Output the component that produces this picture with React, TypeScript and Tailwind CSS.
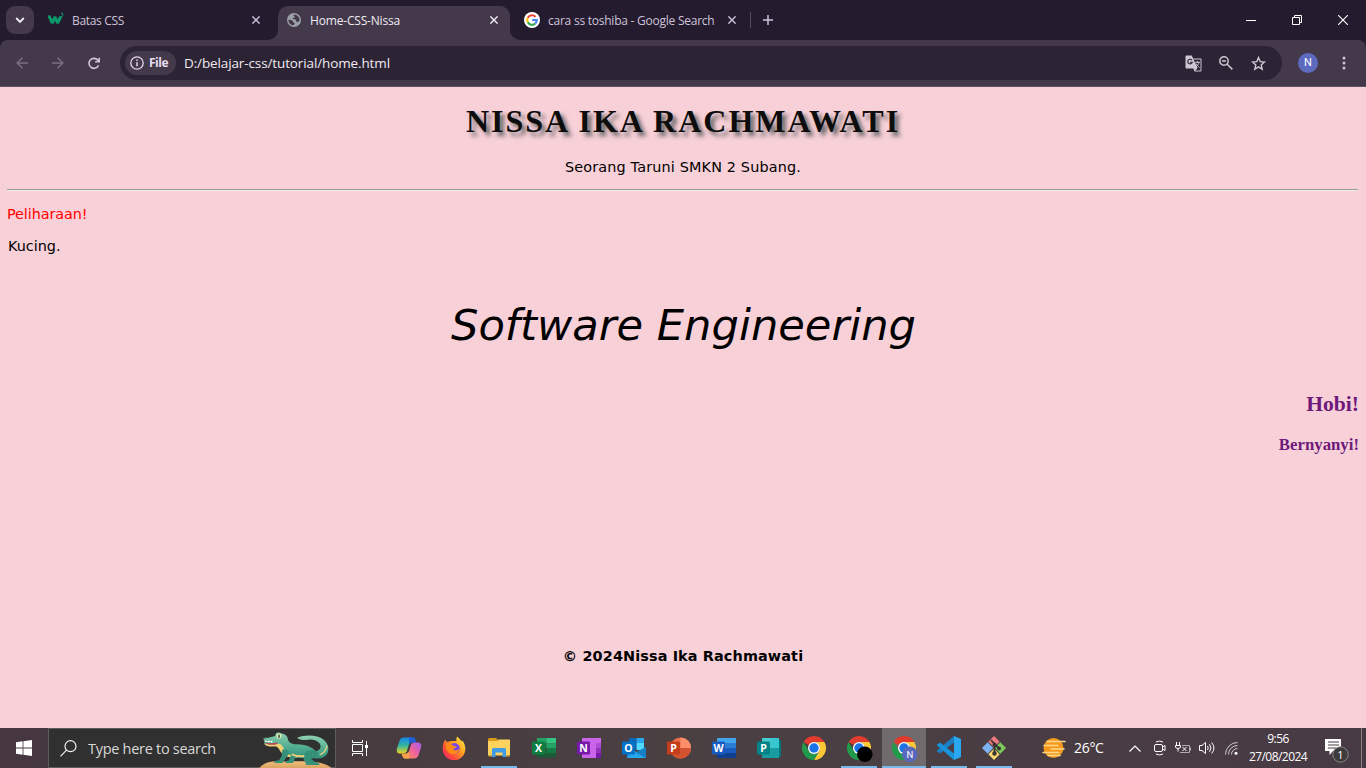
import React from "react";

type Kids = { children?: React.ReactNode };

const CloseIcon = ({ className = "" }: { className?: string }) => (
  <svg className={`h-2 w-2 shrink-0 ${className}`} viewBox="0 0 8 8" fill="none" stroke="currentColor" strokeWidth="1.4">
    <path d="M.4.4l7.2 7.2M7.6.4L.4 7.6" />
  </svg>
);

const GoogleIcon = () => (
  <svg className="h-4 w-4 shrink-0" viewBox="0 0 16 16" fill="none" strokeWidth="2.2">
    <circle cx="8" cy="8" r="8" fill="#fff" />
    <path d="M11.6 4.9A4.8 4.8 0 0 0 3.8 5.7" stroke="#ea4335" />
    <path d="M3.8 5.7a4.8 4.8 0 0 0 0 4.6" stroke="#fbbc05" />
    <path d="M3.8 10.3a4.8 4.8 0 0 0 7.5 1.2" stroke="#34a853" />
    <path d="M11.3 11.5A4.8 4.8 0 0 0 12.8 8H8.2" stroke="#4285f4" />
  </svg>
);

const GlobeIcon = () => (
  <svg className="h-[14px] w-[14px] shrink-0" viewBox="0 0 14 14">
    <circle cx="7" cy="7" r="7" fill="#9aa0a6" />
    <path d="M7.200 1.600c-.8.5-.6 1.600.3 1.900 1 .3 0 1.300-.9 1.300-1 0-.8 1.400.2 1.500 1.900 0 2.400.7 2.400 1.600 0 1 1 1.200 1.900.8.9-.3 1.300-.9 1.500-1.700A5.600 5.600 0 0 0 7.200 1.600zM1.500 6.700c1.400 0 3 .2 3.800.9.7.7.6 1.700 1.500 2 .8.2 1.100.9.6 1.600-.3.5-.7.9-1.200 1.100A5.600 5.600 0 0 1 1.500 6.700z" fill="#43394a" />
  </svg>
);

const W3Icon = () => (
  <svg className="h-4 w-4 shrink-0" viewBox="0 0 16 16" fill="none" stroke="#0c9a6a">
    <path d="M.8 3.500l3.400 7.500 2.800-6 2.600 6 3.200-6.500" strokeWidth="3" strokeLinejoin="bevel" />
    <path d="M13 1.300h2l-1.100 1.400c1.600.1 1.500 2.400-.9 1.800" strokeWidth="1" />
  </svg>
);

const FlareLeft = () => (
  <svg className="h-[10px] w-[10px] shrink-0 self-end" viewBox="0 0 10 10"><path d="M10 0v10H0A10 10 0 0 0 10 0z" fill="#43394a" /></svg>
);
const FlareRight = () => (
  <svg className="h-[10px] w-[10px] shrink-0 self-end" viewBox="0 0 10 10"><path d="M0 0v10h10A10 10 0 0 1 0 0z" fill="#43394a" /></svg>
);

function TabStrip() {
  return (
    <div className="flex h-10 shrink-0 items-start bg-[#241c2e] pl-[6px] text-xs leading-4 text-[#cfc2da]">
      <div className="mt-[6px] flex h-7 w-7 items-center justify-center rounded-[9px] bg-[#43394a]">
        <svg className="h-2 w-[10px]" viewBox="0 0 10 8" fill="none" stroke="#f1e9f5" strokeWidth="1.900"><path d="M1.200 2L5 5.800 8.800 2" /></svg>
      </div>
      <div className="flex h-10 w-[234px] items-center pl-[14px] pr-2">
        <W3Icon />
        <span className="ml-2 flex-1 whitespace-nowrap pt-[2px] tracking-[-0.320px]">Batas CSS</span>
        <CloseIcon />
      </div>
      <div className="flex h-10"><FlareLeft /></div>
      <div className="mt-[6px] flex h-[34px] w-[232px] items-center rounded-t-[10px] bg-[#43394a] pb-[6px] pl-[9px] pr-3 text-[#f1ebf3]">
        <GlobeIcon />
        <span className="ml-[9px] flex-1 whitespace-nowrap pt-[2px] tracking-[-0.180px]">Home-CSS-Nissa</span>
        <CloseIcon />
      </div>
      <div className="flex h-10"><FlareRight /></div>
      <div className="flex h-10 w-[216px] items-center pl-1">
        <GoogleIcon />
        <span className="ml-2 flex-1 whitespace-nowrap pt-[2px] tracking-[-0.240px]">cara ss toshiba - Google Search</span>
        <CloseIcon />
      </div>
      <div className="flex h-10 flex-1 items-center pl-[14px]">
        <div className="h-4 w-px bg-[#564a5e]" />
        <svg className="ml-[12px] h-[10px] w-[10px]" viewBox="0 0 10 10" stroke="#cfc2da" strokeWidth="1.500"><path d="M0 5h10M5 0v10" /></svg>
      </div>
      <div className="flex h-10 items-center pr-[18px] text-white">
        <svg className="mr-9 h-[10px] w-[10px]" viewBox="0 0 10 10" stroke="currentColor"><path d="M0 5.500h10" /></svg>
        <svg className="mr-9 h-[10px] w-[10px]" viewBox="0 0 10 10" fill="none" stroke="currentColor"><path d="M.5 2.500h7v7h-7zM2.500 2.500v-2h7v7h-2" /></svg>
        <svg className="h-[10px] w-[10px]" viewBox="0 0 10 10" fill="none" stroke="currentColor" strokeWidth="1.100"><path d="M0 0l10 10M10 0L0 10" /></svg>
      </div>
    </div>
  );
}

function Toolbar() {
  return (
    <div className="h-[47px] shrink-0 bg-[#241c2e]">
      <div className="flex h-full items-center rounded-t-[8px] border-b border-[#5c5261] bg-[#43394a] pl-4 pr-5">
        <svg className="h-3 w-3" viewBox="0 0 12 12" fill="none" stroke="#7b7082" strokeWidth="1.500"><path d="M12 6H1.500M6.500.7L1.200 6l5.300 5.300" /></svg>
        <svg className="ml-6 h-3 w-3" viewBox="0 0 12 12" fill="none" stroke="#7b7082" strokeWidth="1.500"><path d="M0 6h10.500M5.500.7L10.800 6l-5.300 5.300" /></svg>
        <svg className="ml-6 h-[13px] w-3" viewBox="0 0 12 13" fill="none" stroke="#d2c5dc" strokeWidth="1.600"><path d="M10.600 8.300A5 5 0 1 1 9.900 3.200L11 4.600" /><path d="M11.200.8v4H7.200" /></svg>
        <div className="ml-5 flex h-[34px] flex-1 items-center rounded-full bg-[#2c2434] pl-[5px] pr-4 text-[#f0eaf2]">
          <div className="flex h-6 w-[51px] items-center rounded-full bg-[#43394a] pl-[5px]">
            <svg className="h-[14px] w-[14px]" viewBox="0 0 14 14" fill="none" stroke="#e4d9ea" strokeWidth="1.300"><circle cx="7" cy="7" r="6.200" /><path d="M7 6.200v4M7 3.600v1.400" strokeWidth="1.500" /></svg>
            <span className="ml-[5px] text-xs font-bold leading-4 tracking-[-0.500px] text-[#e8def0]">File</span>
          </div>
          <span className="ml-2 flex-1 whitespace-nowrap text-[13.500px] leading-5 tracking-[-0.120px]">D:/belajar-css/tutorial/home.html</span>
          <svg className="h-[17px] w-[17px]" viewBox="0 0 17 17">
            <path d="M1.500.5h5.300l1.300 3h7.400a1 1 0 0 1 1 1V15.500a1 1 0 0 1-1 1H9.600l-1.300-3H1.500a1 1 0 0 1-1-1v-11a1 1 0 0 1 1-1z" fill="#cfc6d4" />
            <path d="M8.500 4.500h7v11h-5l2-2.500z" fill="#2c2434" />
            <path d="M7 5.200A2.300 2.300 0 1 0 7.300 7.300H5" fill="none" stroke="#2c2434" strokeWidth="1.100" />
            <path d="M10 7.300h5M12.500 6v1.300M14 7.300c-.4 2-1.700 3.500-3.400 4.600M11 8.500c.700 1.600 1.800 2.800 3.500 4" fill="none" stroke="#cfc6d4" />
          </svg>
          <svg className="ml-[17px] h-[14px] w-[14px]" viewBox="0 0 14 14" fill="none" stroke="#cfc6d4" strokeWidth="1.500"><circle cx="5" cy="5" r="4.200" /><path d="M3 5h4M8.200 8.200l5.200 5.200" /></svg>
          <svg className="ml-[18px] h-[15px] w-[15px]" viewBox="0 0 15 15" fill="none" stroke="#cfc6d4" strokeWidth="1.400"><path d="M7.500 1.600l1.700 4 4.300.4-3.300 2.900 1 4.300-3.700-2.300-3.700 2.300 1-4.300L1.500 6l4.300-.4z" /></svg>
        </div>
        <div className="ml-4 flex h-5 w-5 items-center justify-center rounded-full bg-[#5c6bc0] pt-px font-[Roboto] text-[11px] text-white">N</div>
        <svg className="ml-[24px] h-[14px] w-[4px]" viewBox="0 0 4 14" fill="#cfc2da"><circle cx="2" cy="2" r="1.500" /><circle cx="2" cy="7" r="1.500" /><circle cx="2" cy="12" r="1.500" /></svg>
      </div>
    </div>
  );
}

function Page() {
  return (
    <main className="min-h-0 flex-1 overflow-hidden bg-[#f8d0d8] px-[7px] pt-4 font-['DejaVu_Sans',sans-serif] text-[14.400px] leading-[18px] text-black">
      <h1 className="whitespace-nowrap text-center font-['Liberation_Serif',serif] text-[32px] font-bold leading-9 tracking-[2px] text-[#0d0d0d] [text-shadow:4px_4px_4px_#666]">NISSA IKA RACHMAWATI</h1>
      <p className="mt-[19px] text-center tracking-[0.160px]">Seorang Taruni SMKN 2 Subang.</p>
      <hr className="mr-px mt-[13px] h-[2px] border-0 border-t border-[#9a9a9a] bg-[#eeeeee]" />
      <p className="mt-[14px] tracking-[-0.080px] text-[#ff0000]">Peliharaan!</p>
      <p className="mt-[14px] pl-px">Kucing.</p>
      <p className="mt-[44px] pl-px text-center text-[43.200px] italic leading-[52px]">Software Engineering</p>
      <h2 className="mt-10 text-right font-['Liberation_Serif',serif] text-[21.600px] font-bold leading-[26px] text-[#6e1a7c]">Hobi!</h2>
      <p className="mt-[18px] text-right font-['Liberation_Serif',serif] text-[16.800px] font-bold leading-5 text-[#6e1a7c]">Bernyanyi!</p>
      <p className="mt-[192px] text-center font-bold tracking-[0.130px]">© 2024Nissa Ika Rachmawati</p>
    </main>
  );
}

const Crocodile = () => (
  <svg className="h-[39px] w-[77px] shrink-0" viewBox="85 10 231 117">
    <defs>
      <linearGradient id="croc" x1="0" y1="0" x2="0" y2="1"><stop offset="0" stopColor="#8fd0b2" /><stop offset=".6" stopColor="#4fab8e" /><stop offset="1" stopColor="#34907c" /></linearGradient>
      <linearGradient id="sand" x1="0" y1="0" x2="0" y2="1"><stop offset="0" stopColor="#f2be7a" /><stop offset="1" stopColor="#d8a060" /></linearGradient>
    </defs>
    <path d="M88 129c10-16 30-22 52-22 30 2 40-2 70 0 40 0 80 4 98 22z" fill="url(#sand)" />
    <path d="M202 36c26-10 62-8 80 6 18 14 18 38 4 50-14 10-34 8-46-2l-12-16c20 8 38 4 44-6 6-14-14-28-34-26-14 2-28 2-36-6z" fill="url(#croc)" />
    <path d="M101 40c2-5 8-4 12-3l24-6c-2-9 10-14 17-8 16 3 20 10 22 22 4 8 14 11 26 11 30 0 54 12 60 28-10 14-50 14-78 12-20-4-32-20-38-36l-30 1c-10-1-14-7-11-13z" fill="url(#croc)" />
    <path d="M104 54c12 3 28 3 44 0 8 2 12 10 18 20 8 14 20 18 40 20-30 6-50-6-58-24-4-6-8-8-14-8-14 2-26-2-30-8z" fill="#f3cf75" />
    <path d="M105 50c14 4 26 4 40 0l-4 6c-14 3-28 2-36-6z" fill="#b84850" />
    <path d="M104 45l5 5 4-4 4 5 4-4 4 4 5-5" fill="#fff" />
    <ellipse cx="148" cy="31" rx="7" ry="8" fill="#dceeb0" /><ellipse cx="148" cy="32" rx="2" ry="6" fill="#172626" />
    <circle cx="106" cy="39" r="2" fill="#256b60" />
    <path d="M158 72c10-4 20 2 20 12l-10 14-10 14h-24c-2-4 6-8 14-8l8-12zM186 84c8-2 14 2 12 10l-8 18h-24c2-6 8-6 12-8zM228 78c18-8 38-4 38 8-2 10-16 12-22 14l12 8c8 2 14 6 14 10h-40l-10-22z" fill="#349079" />
    <path d="M186 86c12 5 26 7 38 5" stroke="#f3cf75" strokeWidth="6" fill="none" />
    <path d="M270 88c14-6 20-16 22-28" stroke="#e5cf7f" strokeWidth="4" fill="none" />
  </svg>
);

const Copilot = () => (
  <svg className="h-6 w-[26px]" viewBox="0 0 26 24">
    <defs>
      <linearGradient id="cpa" x1="0" y1="0" x2="0" y2="1"><stop offset="0" stopColor="#1687ea" /><stop offset=".5" stopColor="#32b6a0" /><stop offset="1" stopColor="#f0d31c" /></linearGradient>
      <linearGradient id="cpb" x1="1" y1="0" x2="0" y2="1"><stop offset="0" stopColor="#a05df0" /><stop offset=".5" stopColor="#f2629b" /><stop offset="1" stopColor="#fa9b48" /></linearGradient>
    </defs>
    <path d="M8 1.500h9.500L14 5.500l-2.500 8.300c-.8 2.700-2 3.700-4.500 3.700H4c-3 0-3.700-2.300-3-5L3.500 5C4.300 2.500 5.700 1.500 8 1.500z" fill="url(#cpa)" />
    <path d="M13 1.500h4c2 0 2.600 1.800 3.400 5H17c-2 0-3 .6-4 2z" fill="#1c5fd6" />
    <path d="M18 22.500H8.500l3.500-4 2.500-8.300c.8-2.700 2-3.700 4.500-3.700h3c3 0 3.700 2.300 3 5L22.500 19c-.8 2.500-2.200 3.500-4.500 3.500z" fill="url(#cpb)" />
    <path d="M13 22.500H9c-2 0-2.600-1.800-3.400-5H9c2 0 3-.6 4-2z" fill="#f5a24a" />
    <path d="M12.600 9.500h1.800l-1.400 5.500h-1.800z" fill="#4a4042" />
  </svg>
);

const Firefox = () => (
  <svg className="h-6 w-6" viewBox="0 0 24 24">
    <defs>
      <linearGradient id="ffo" x1="1" y1="0" x2="0" y2="1"><stop offset="0" stopColor="#fff44f" /><stop offset=".4" stopColor="#ffa31e" /><stop offset=".7" stopColor="#ff4b3a" /><stop offset="1" stopColor="#e8207a" /></linearGradient>
    </defs>
    <path d="M15.500.5c1 2 3 3 4.500 5l.5-1c2 3 3 6 2.800 8.500A11.300 11.300 0 0 1 .7 13C.5 9 1.500 6 3.500 3.500L4.500 6 8 5.200C10 5 13 5 14.500 5c-.5-2 0-3.500 1-4.500z" fill="url(#ffo)" />
    <circle cx="12.500" cy="12.500" r="5.400" fill="#7747e8" />
    <path d="M4 8c3-1 5 0 7 1.500 2 1 3 1 4 .5-.5 2-3 2-4 3 1 2 5 2 7-1-.5 6-8 8-12 4C4 14 3.500 11 4 8z" fill="#ff8a16" />
  </svg>
);

const Explorer = () => (
  <svg className="h-5 w-[22px]" viewBox="0 0 22 20">
    <path d="M0 3V1.500A1.500 1.500 0 0 1 1.500 0H8l2 2-1 2z" fill="#dc9c16" />
    <path d="M0 3h9l1.500-1.500H21a1 1 0 0 1 1 1V17.500H0z" fill="#fdd35e" />
    <path d="M4 19v-7.500A1.500 1.500 0 0 1 5.500 10h11a1.500 1.500 0 0 1 1.500 1.500V19h-3.500v-4.500h-7V19z" fill="#3d9be8" />
    <path d="M0 17.500h4v1H1zM18 17.500h4l-1 1h-3z" fill="#e8b838" />
  </svg>
);

const Badge = ({ letter, fill }: { letter: string; fill: string }) => (
  <g>
    <rect x="0" y="5.500" width="13" height="13" rx="1" fill={fill} />
    <text x="6.500" y="15.700" textAnchor="middle" fill="#fff" fontFamily="Open Sans, sans-serif" fontWeight="700" fontSize="10.500">{letter}</text>
  </g>
);

const Office = ({ children }: Kids) => <svg className="h-6 w-6" viewBox="0 0 24 24">{children}</svg>;

const Excel = () => (
  <Office>
    <path d="M5 2h9.500v5.500H5z" fill="#21a366" /><path d="M14.500 2H24v5.500h-9.500z" fill="#33c481" /><path d="M5 7.500h9.500v5H5z" fill="#107c41" /><path d="M14.500 7.500H24v5h-9.500z" fill="#21a366" /><path d="M5 12.500h9.500v9H5z" fill="#185c37" /><path d="M14.500 12.500H24v5h-9.500z" fill="#107c41" /><path d="M14.500 17.500H24v4h-9.500z" fill="#185c37" />
    <Badge letter="X" fill="#107c41" />
  </Office>
);
const OneNote = () => (
  <Office>
    <path d="M5 2h14v20H5z" fill="#ca64ea" /><path d="M19 2h5v5h-5z" fill="#ca64ea" /><path d="M19 7h5v5h-5z" fill="#ae4bd5" /><path d="M19 12h5v5h-5z" fill="#9332bf" /><path d="M19 17h5v5h-5z" fill="#7719aa" />
    <Badge letter="N" fill="#7719aa" />
  </Office>
);
const Outlook = () => (
  <Office>
    <path d="M7 2h7.500v5H7z" fill="#0a68b7" /><path d="M14.500 2H22v5h-7.500z" fill="#28a8ea" /><path d="M7 7h7.500v6H7z" fill="#0364b8" /><path d="M14.500 7H22v7h-7.500z" fill="#50d9ff" />
    <path d="M5 10.500l10 5.500 9-5v11H5z" fill="#1490df" /><path d="M12 15l12 7H5z" fill="#28a8ea" /><path d="M14 16.500l10-5.500v11z" fill="#167fc5" />
    <Badge letter="O" fill="#0072c6" />
  </Office>
);
const PowerPoint = () => (
  <Office>
    <circle cx="13.500" cy="12" r="10.500" fill="#ed6c47" /><path d="M13.500 1.500A10.500 10.500 0 0 1 24 12H13.500z" fill="#ff8f6b" /><path d="M3 12h21a10.500 10.500 0 0 1-21 0z" fill="#d35230" />
    <Badge letter="P" fill="#c43e1c" />
  </Office>
);
const Word = () => (
  <Office>
    <path d="M5 2h19v5H5z" fill="#41a5ee" /><path d="M5 7h19v5H5z" fill="#2b7cd3" /><path d="M5 12h19v5H5z" fill="#185abd" /><path d="M5 17h19v5H5z" fill="#103f91" />
    <Badge letter="W" fill="#185abd" />
  </Office>
);
const Publisher = () => (
  <Office>
    <path d="M18 4h6v17h-6z" fill="#03787c" /><path d="M5 2h17v10H5z" fill="#37c6d0" /><path d="M5 12h17v10H5z" fill="#1a9ba1" /><path d="M5 2h8.500v10H5z" fill="#43cdd0" />
    <Badge letter="P" fill="#038387" />
  </Office>
);

const Chrome = ({ children }: Kids) => (
  <svg className="h-7 w-7" viewBox="-2 -2 28 28">
    <path d="M12 0A12 12 0 0 1 22.400 6H12A6 6 0 0 0 6.800 9L1.600 6A12 12 0 0 1 12 0z" fill="#e33b2e" />
    <path d="M22.400 6A12 12 0 0 1 12 24l5.200-9A6 6 0 0 0 12 6z" fill="#fcc934" />
    <path d="M1.600 6l5.200 9a6 6 0 0 0 10.400 0L12 24A12 12 0 0 1 1.600 6z" fill="#229a4b" />
    <circle cx="12" cy="12" r="6" fill="#fff" /><circle cx="12" cy="12" r="4.700" fill="#1a73e8" />
    {children}
  </svg>
);

const VSCode = () => (
  <svg className="h-6 w-6" viewBox="0 0 24 24">
    <path d="M17 0l7 3v18l-7 3z" fill="#2aa8ef" /><path d="M17 0v6.500L3 17.500 0 15.500v-1z" fill="#1b7fc4" /><path d="M17 24v-6.500L3 6.500 0 8.500v1z" fill="#1893dc" />
  </svg>
);

const Git = () => (
  <svg className="h-[26px] w-[26px]" viewBox="0 0 26 26">
    <g transform="rotate(45 13 13)">
      <path d="M4.500 4.500h8v8h-8z" fill="#f07a80" /><path d="M13.500 4.500h8v8h-8z" fill="#7cc95c" /><path d="M13.500 13.500h8v8h-8z" fill="#f8da70" /><path d="M4.500 13.500h8v8h-8z" fill="#7fb2f2" />
    </g>
    <path d="M10 5l3.500 4v10M13.500 9l4.500 4.500" fill="none" stroke="#3a3333" strokeWidth="1.800" />
    <circle cx="13.500" cy="9.500" r="2" fill="#3a3333" /><circle cx="18" cy="13.500" r="2" fill="#3a3333" /><circle cx="13.500" cy="18.500" r="2.200" fill="#3a3333" />
  </svg>
);

function AppButton({ children, open = false, active = false }: Kids & { open?: boolean; active?: boolean }) {
  return (
    <div className={`flex h-10 shrink-0 flex-col items-center ${active ? "ml-px w-11 bg-[#716a6c]" : "w-[45px]"}`}>
      <div className="flex h-[38px] w-full items-center justify-center pt-[2px]">{children}</div>
      <div className={`h-[2px] ${active ? "w-full" : "w-9"} ${open ? "bg-[#76b9ed]" : ""}`} />
    </div>
  );
}

function Taskbar() {
  return (
    <footer className="flex h-10 shrink-0 items-center bg-linear-to-r from-[#45363f] via-[#4a4042] to-[#483a44] text-white">
      <div className="flex w-12 justify-center">
        <svg className="h-4 w-4" viewBox="0 0 16 16" fill="#fff"><path d="M0 2.200L6.600 1.300v6.300H0zM7.400 1.200L16 0v7.600H7.400zM0 8.400h6.600v6.300L0 13.800zM7.400 8.400H16V16l-8.600-1.200z" /></svg>
      </div>
      <div className="flex h-10 w-72 items-center border border-[#625b5e] bg-[#303030] pl-[11px]">
        <svg className="h-[17px] w-[17px]" viewBox="0 0 17 17" fill="none" stroke="#f2f2f2" strokeWidth="1.200"><circle cx="10.500" cy="6.200" r="5.500" /><path d="M6.500 10.200L.5 16.300" /></svg>
        <span className="ml-[11px] flex-1 whitespace-nowrap pt-[2px] text-[14.500px] leading-5 tracking-[-0.290px] text-[#d8d8d8]">Type here to search</span>
        <Crocodile />
      </div>
      <div className="flex w-[50px] justify-center pr-[2px]">
        <svg className="h-4 w-4" viewBox="0 0 16 16" fill="none" stroke="#fff"><path d="M.5 0v2.500h10V0M.5 16v-2.500h10V16M.5 4.500h10v7H.5zM14.500 1v15" /><path d="M13 5h3v3h-3z" fill="#fff" stroke="none" /></svg>
      </div>
      <AppButton><Copilot /></AppButton>
      <AppButton><Firefox /></AppButton>
      <AppButton open><Explorer /></AppButton>
      <AppButton><Excel /></AppButton>
      <AppButton><OneNote /></AppButton>
      <AppButton><Outlook /></AppButton>
      <AppButton><PowerPoint /></AppButton>
      <AppButton><Word /></AppButton>
      <AppButton><Publisher /></AppButton>
      <AppButton><Chrome /></AppButton>
      <AppButton open><Chrome><circle cx="17.800" cy="18.200" r="7.800" fill="#000" /></Chrome></AppButton>
      <AppButton open active><Chrome><circle cx="17.800" cy="18.200" r="7.800" fill="#5969bd" /><text x="17.800" y="21.600" textAnchor="middle" fill="#fff" fontSize="9.500" fontFamily="Roboto, sans-serif">N</text></Chrome></AppButton>
      <AppButton open><VSCode /></AppButton>
      <AppButton open><Git /></AppButton>
      <div className="flex flex-1 items-center pl-[26px]">
        <svg className="h-5 w-6 shrink-0" viewBox="0 0 24 20">
          <circle cx="11.500" cy="10" r="10" fill="#f7981d" />
          <path d="M5 3.500h18M2 7.500h14M9 11h13M1 14.500h16M6 17.500h12" stroke="#ffd98a" strokeWidth="1.600" strokeLinecap="round" />
        </svg>
        <span className="ml-2 w-[55px] text-[14px] leading-5 tracking-[-0.300px]">26°C</span>
        <svg className="h-[7px] w-3" viewBox="0 0 12 7" fill="none" stroke="#fff" strokeWidth="1.200"><path d="M.5 6.500L6 1l5.500 5.500" /></svg>
        <svg className="ml-[13px] h-4 w-3" viewBox="0 0 12 16" fill="none" stroke="#fff"><rect x=".5" y="4.500" width="8" height="7" rx="1.500" /><path d="M8.500 7l2.500-1.500v5L8.500 9M2 2q3.500-2 7 0M2 14q3.500 2 7 0" /></svg>
        <svg className="ml-[9px] h-3 w-4" viewBox="0 0 16 12" fill="none" stroke="#fff"><path d="M1.500 0v3M4.500 0v3M.5 3.500h5V5Q5 6.500 3 6.500T.5 5zM3 6.500V9.500" /><path d="M5 10.500h9.500v-7H7M15.500 5.500v3" stroke="#b5aeb1" /><path d="M7.500 5l4 4M11.500 5l-4 4" /></svg>
        <svg className="ml-2 h-[14px] w-4" viewBox="0 0 16 14" fill="none" stroke="#fff"><path d="M.5 4.500h2.500L6.500 1.500v11L3 9.500H.5zM8.500 5q1.500 2 0 4M10.500 3.200q3 3.800 0 7.600M12.700 1.500q4.500 5.500 0 11" /></svg>
        <svg className="ml-[10px] h-[13px] w-[13px]" viewBox="0 0 13 13" fill="none" stroke="#cfcaca"><path d="M.5 12.500A12 12 0 0 1 12.500.5M3.500 12.500a9 9 0 0 1 9-9M6.500 12.500a6 6 0 0 1 6-6" /><circle cx="11" cy="11.300" r="1.500" fill="#fff" stroke="none" /></svg>
        <div className="ml-[10px] w-[60px] shrink-0 whitespace-nowrap text-center text-xs leading-[18px] tracking-[-0.550px]"><div>9:56</div><div>27/08/2024</div></div>
        <svg className="ml-4 mt-[5px] h-[25px] w-[25px] shrink-0" viewBox="0 0 25 25">
          <path d="M1 1h16v12H9l-3.500 4V13H1z" fill="#fff" /><path d="M4 4h11M4 7h11M4 10h8" stroke="#483c45" />
          <circle cx="16.500" cy="16.500" r="7.700" fill="#3e3b3d" stroke="#8b8588" /><text x="16.500" y="20.500" textAnchor="middle" fill="#fff" fontSize="11" fontFamily="Open Sans, sans-serif">1</text>
        </svg>
      </div>
      <div className="h-10 w-[5px] border-l border-[#8a8286]" />
    </footer>
  );
}

export default function App() {
  return (
    <div className="flex h-screen w-full flex-col overflow-hidden font-['Open_Sans',sans-serif]">
      <TabStrip />
      <Toolbar />
      <Page />
      <Taskbar />
    </div>
  );
}
